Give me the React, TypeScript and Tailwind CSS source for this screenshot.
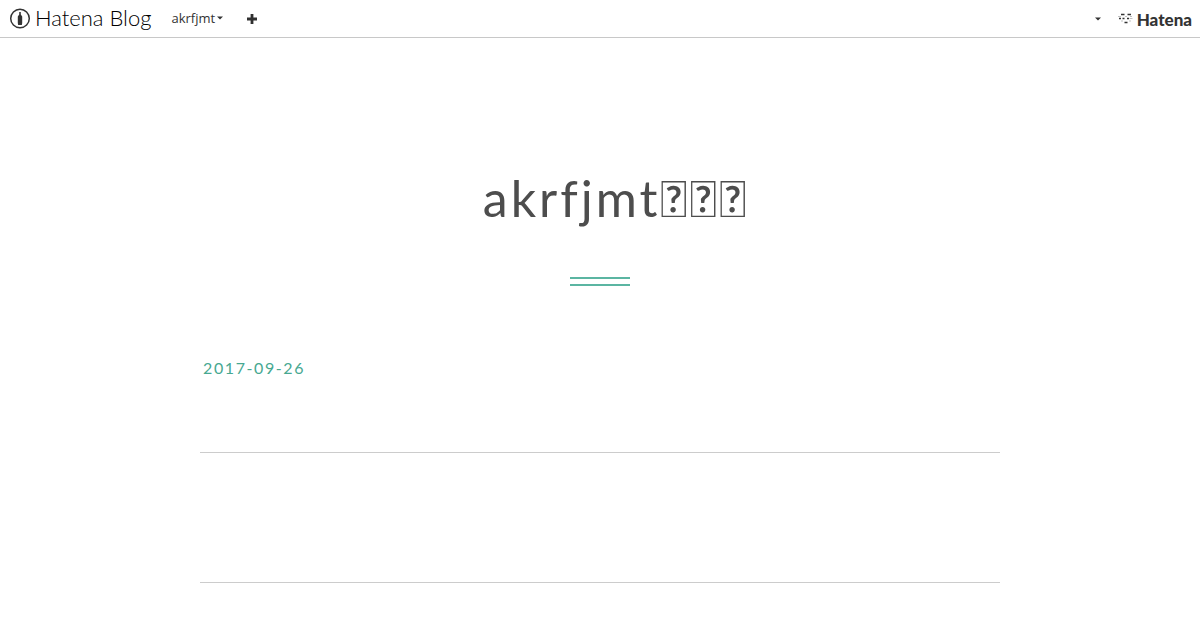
function Caret() {
  return (
    <svg width="6" height="4" viewBox="0 0 6 4" fill="#333333" aria-hidden="true">
      <path d="M0 .5h6L3 3.5z" />
    </svg>
  );
}

function GlobalHeader() {
  return (
    <header className="flex h-[38px] items-center border-b border-[#c8c8c8] px-2 text-[#333333]">
      <a href="#blog" className="flex items-center gap-1 pl-px">
        <svg width="22" height="22" viewBox="0 0 22 22" aria-hidden="true">
          <circle cx="11" cy="10.5" r="9.3" fill="none" stroke="#333333" strokeWidth="1.5" />
          <path d="M10.2 4h1.6v2.4l1.4 2v6.8l-.4 1.800H9.200l-.4-1.800V8.400l1.400-2z" fill="#333333" />
        </svg>
        <span className="pb-0.5 font-['Lato'] text-[22px] leading-6 font-light text-black">Hatena Blog</span>
      </a>
      <button type="button" className="ml-5 flex items-center gap-0.5 pb-0.5 font-['Open_Sans'] text-[13px] leading-5">
        akrfjmt
        <Caret />
      </button>
      <button type="button" aria-label="New entry" className="ml-6">
        <svg width="10" height="10" viewBox="0 0 10 10" aria-hidden="true">
          <path d="M5 0v10M0 5h10" stroke="#303030" strokeWidth="2.8" />
        </svg>
      </button>
      <button type="button" aria-label="Account menu" className="ml-auto">
        <Caret />
      </button>
      <a href="#hatena" className="ml-4 flex items-center gap-0.5">
        <svg width="18" height="12" viewBox="0 0 18 12" fill="none" stroke="#333333" aria-hidden="true">
          <path d="M4 1.500h3.500M10.500 1.500h3.500M2 5.500h2M5.500 5.500h2M10 5.500h2M7.500 9.500h3" strokeWidth="1.300" />
          <path d="M1 3.500h3M8 3.500h2M13 3.500h2M12.500 5.500h3M4 8h2M12 8h2" strokeWidth="1" opacity=".3" />
        </svg>
        <span className="pt-0.5 font-['Lato'] text-[17px] leading-6 font-black">Hatena</span>
      </a>
    </header>
  );
}

export default function App() {
  return (
    <div className="min-h-screen bg-white font-['Lato',sans-serif]">
      <GlobalHeader />
      <h1 className="pt-[120px] pl-8 text-center text-[50px] leading-20 tracking-[3px] text-[#4d4d4d]">
        <a href="#home">akrfjmt{"\uE000\uE000\uE000"}</a>
      </h1>
      <div className="mx-auto mt-[39px] h-[9px] w-[60px] border-y-2 border-[#5bb5a2]" />
      <main className="mx-auto max-w-[800px]">
        <article className="h-[167px] border-b border-[#cccccc] px-[3px] pt-[70px]">
          <a href="#date" className="text-base leading-6 tracking-widest text-[#47a891]">
            <time dateTime="2017-09-26">2017-09-26</time>
          </a>
        </article>
        <article className="h-[130px] border-b border-[#cccccc]" />
      </main>
    </div>
  );
}
